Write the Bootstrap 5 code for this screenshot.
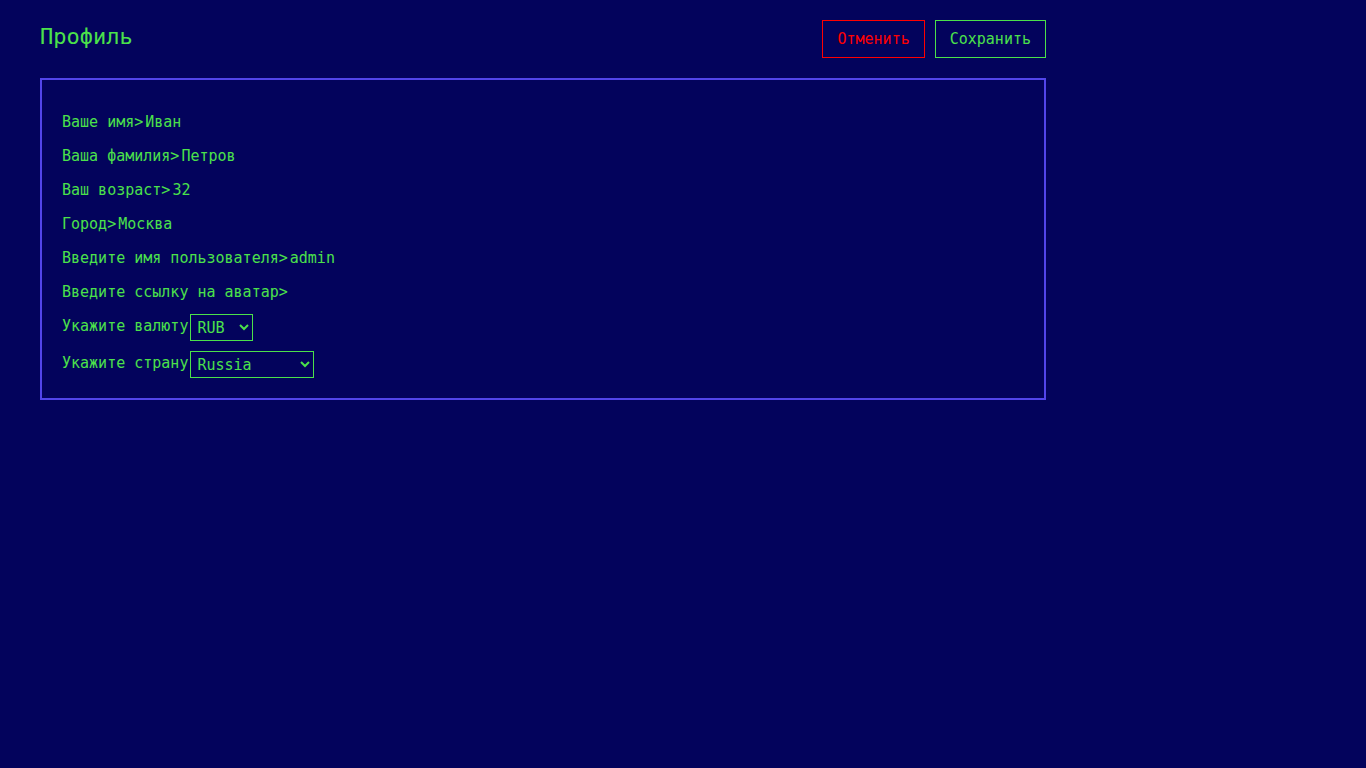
<!DOCTYPE html>
<html lang="ru">
<head>
<meta charset="utf-8">
<meta name="viewport" content="width=device-width, initial-scale=1">
<title>Профиль</title>
<link href="https://cdn.jsdelivr.net/npm/bootstrap@5.3.0/dist/css/bootstrap.min.css" rel="stylesheet">
<style>
  :root { --term-bg: #03035c; --term-green: #4be14b; --term-red: #ff0000; --term-frame: #5245ea; }
  body {
    background: var(--term-bg);
    color: var(--term-green);
    font-family: "DejaVu Sans Mono", "Liberation Mono", monospace;
    font-size: 15px;
    line-height: 24px;
  }
  .page { max-width: 1086px; padding: 20px 40px; }
  .page-title { font-size: 22px; line-height: 34px; }
  .actions { gap: 10px; }
  .btn-term {
    --bs-btn-color: var(--term-green);
    --bs-btn-border-color: var(--term-green);
    --bs-btn-hover-color: var(--term-bg);
    --bs-btn-hover-bg: var(--term-green);
    --bs-btn-hover-border-color: var(--term-green);
    --bs-btn-border-radius: 0;
    --bs-btn-padding-x: 14px;
    --bs-btn-font-size: 15px;
    --bs-btn-line-height: 24px;
  }
  .btn-term-danger {
    --bs-btn-color: var(--term-red);
    --bs-btn-border-color: var(--term-red);
    --bs-btn-hover-bg: var(--term-red);
    --bs-btn-hover-border-color: var(--term-red);
  }
  .panel { margin-top: 20px; padding: 20px; border: 2px solid var(--term-frame); }
  .field { margin-top: 10px; gap: 2px; }
  .field input {
    min-width: 0;
    height: 24px;
    padding: 0;
    border: 0;
    outline: 0;
    background: transparent;
    color: inherit;
  }
  .field select {
    height: 27px;
    padding: 1px 2px;
    border: 1px solid var(--term-green);
    border-radius: 0;
    background-color: var(--term-bg);
    color: inherit;
    line-height: 24px;
  }
  .pick-currency { width: 63px; }
  .pick-country { width: 124px; }
</style>
</head>
<body>
<main class="page">
  <form>
    <header class="d-flex justify-content-between align-items-start">
      <h1 class="page-title fw-normal mb-0">Профиль</h1>
      <div class="actions d-flex">
        <button type="button" class="btn btn-term btn-term-danger">Отменить</button>
        <button type="submit" class="btn btn-term">Сохранить</button>
      </div>
    </header>
    <section class="panel">
      <div class="field d-flex"><label for="first-name">Ваше имя&gt;</label><input class="flex-grow-1" id="first-name" type="text" value="Иван"></div>
      <div class="field d-flex"><label for="last-name">Ваша фамилия&gt;</label><input class="flex-grow-1" id="last-name" type="text" value="Петров"></div>
      <div class="field d-flex"><label for="age">Ваш возраст&gt;</label><input class="flex-grow-1" id="age" type="text" inputmode="numeric" value="32"></div>
      <div class="field d-flex"><label for="city">Город&gt;</label><input class="flex-grow-1" id="city" type="text" value="Москва"></div>
      <div class="field d-flex"><label for="username">Введите имя пользователя&gt;</label><input class="flex-grow-1" id="username" type="text" value="admin"></div>
      <div class="field d-flex"><label for="avatar">Введите ссылку на аватар&gt;</label><input class="flex-grow-1" id="avatar" type="text"></div>
      <div class="field d-flex align-items-start">
        <label for="currency">Укажите валюту</label>
        <select class="pick-currency" id="currency"><option>RUB</option></select>
      </div>
      <div class="field d-flex align-items-start">
        <label for="country">Укажите страну</label>
        <select class="pick-country" id="country"><option>Russia</option></select>
      </div>
    </section>
  </form>
</main>
<script src="https://cdn.jsdelivr.net/npm/bootstrap@5.3.0/dist/js/bootstrap.bundle.min.js"></script>
</body>
</html>
